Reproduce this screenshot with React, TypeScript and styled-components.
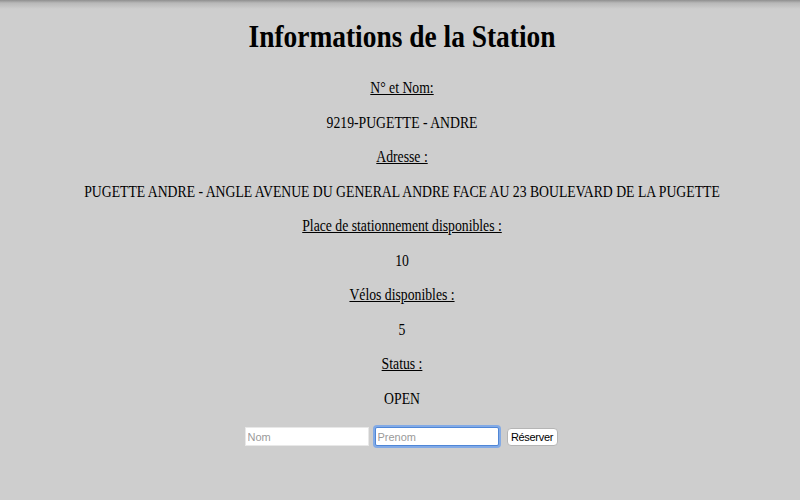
import React from "react";
import styled, { createGlobalStyle } from "styled-components";

const Global = createGlobalStyle`
  html, body { margin: 0; padding: 0; background: #cecece; }
  body { font-family: "Liberation Serif", "Times New Roman", serif; color: #000; }
`;

const Page = styled.div`
  min-height: 500px;
  background: linear-gradient(to bottom, #8f8f8f 0px, #b8b8b8 3px, #cecece 9px, #cecece 100%);
  padding: 1px 0 0 4px;
  text-align: center;
`;

const Title = styled.h1`
  font-size: 32px;
  font-weight: bold;
  margin: 17px 0 24px;
  transform: scaleX(0.857);
`;

const Label = styled.p`
  margin: 16px 0;
  font-size: 16px;
  text-decoration: underline;
  line-height: 18.5px;
  transform: scaleX(0.857);
`;

const Value = styled.p`
  margin: 16px 0;
  font-size: 16px;
  line-height: 18.5px;
  transform: scaleX(0.857);
`;

const Form = styled.form`
  display: flex;
  justify-content: center;
  align-items: center;
  margin-top: 19px;
  padding-right: 2px;
`;

const Input = styled.input<{ $focused?: boolean }>`
  width: 124px;
  height: 19px;
  box-sizing: border-box;
  margin-right: ${(p) => (p.$focused ? "8px" : "6px")};
  border: 1px solid ${(p) => (p.$focused ? "#4f86d6" : "#e8e8e8")};
  box-shadow: ${(p) => (p.$focused ? "0 0 0 2px #82aae6" : "none")};
  border-radius: ${(p) => (p.$focused ? "2px" : "0")};
  background: #fff;
  font-family: "Liberation Sans", Arial, sans-serif;
  font-size: 11px;
  padding: 0 2px;
  outline: none;
  &::placeholder { color: #9a9a9a; }
`;

const Button = styled.button`
  height: 18px;
  width: 51px;
  padding: 0;
  background: #fff;
  border: 1px solid #b5b5b5;
  border-radius: 4px;
  font-family: "Liberation Sans", Arial, sans-serif;
  font-size: 11px;
  letter-spacing: -0.3px;
  color: #000;
`;

const rows: [string, string][] = [
  ["N° et Nom:", "9219-PUGETTE - ANDRE"],
  ["Adresse :", "PUGETTE ANDRE - ANGLE AVENUE DU GENERAL ANDRE FACE AU 23 BOULEVARD DE LA PUGETTE"],
  ["Place de stationnement disponibles :", "10"],
  ["Vélos disponibles :", "5"],
  ["Status :", "OPEN"],
];

export default function App() {
  return (
    <>
      <Global />
      <Page>
        <Title>Informations de la Station</Title>
        {rows.map(([l, v]) => (
          <React.Fragment key={l}>
            <Label>{l}</Label>
            <Value>{v}</Value>
          </React.Fragment>
        ))}
        <Form onSubmit={(e) => e.preventDefault()}>
          <Input placeholder="Nom" />
          <Input placeholder="Prenom" $focused />
          <Button type="submit">Réserver</Button>
        </Form>
      </Page>
    </>
  );
}
